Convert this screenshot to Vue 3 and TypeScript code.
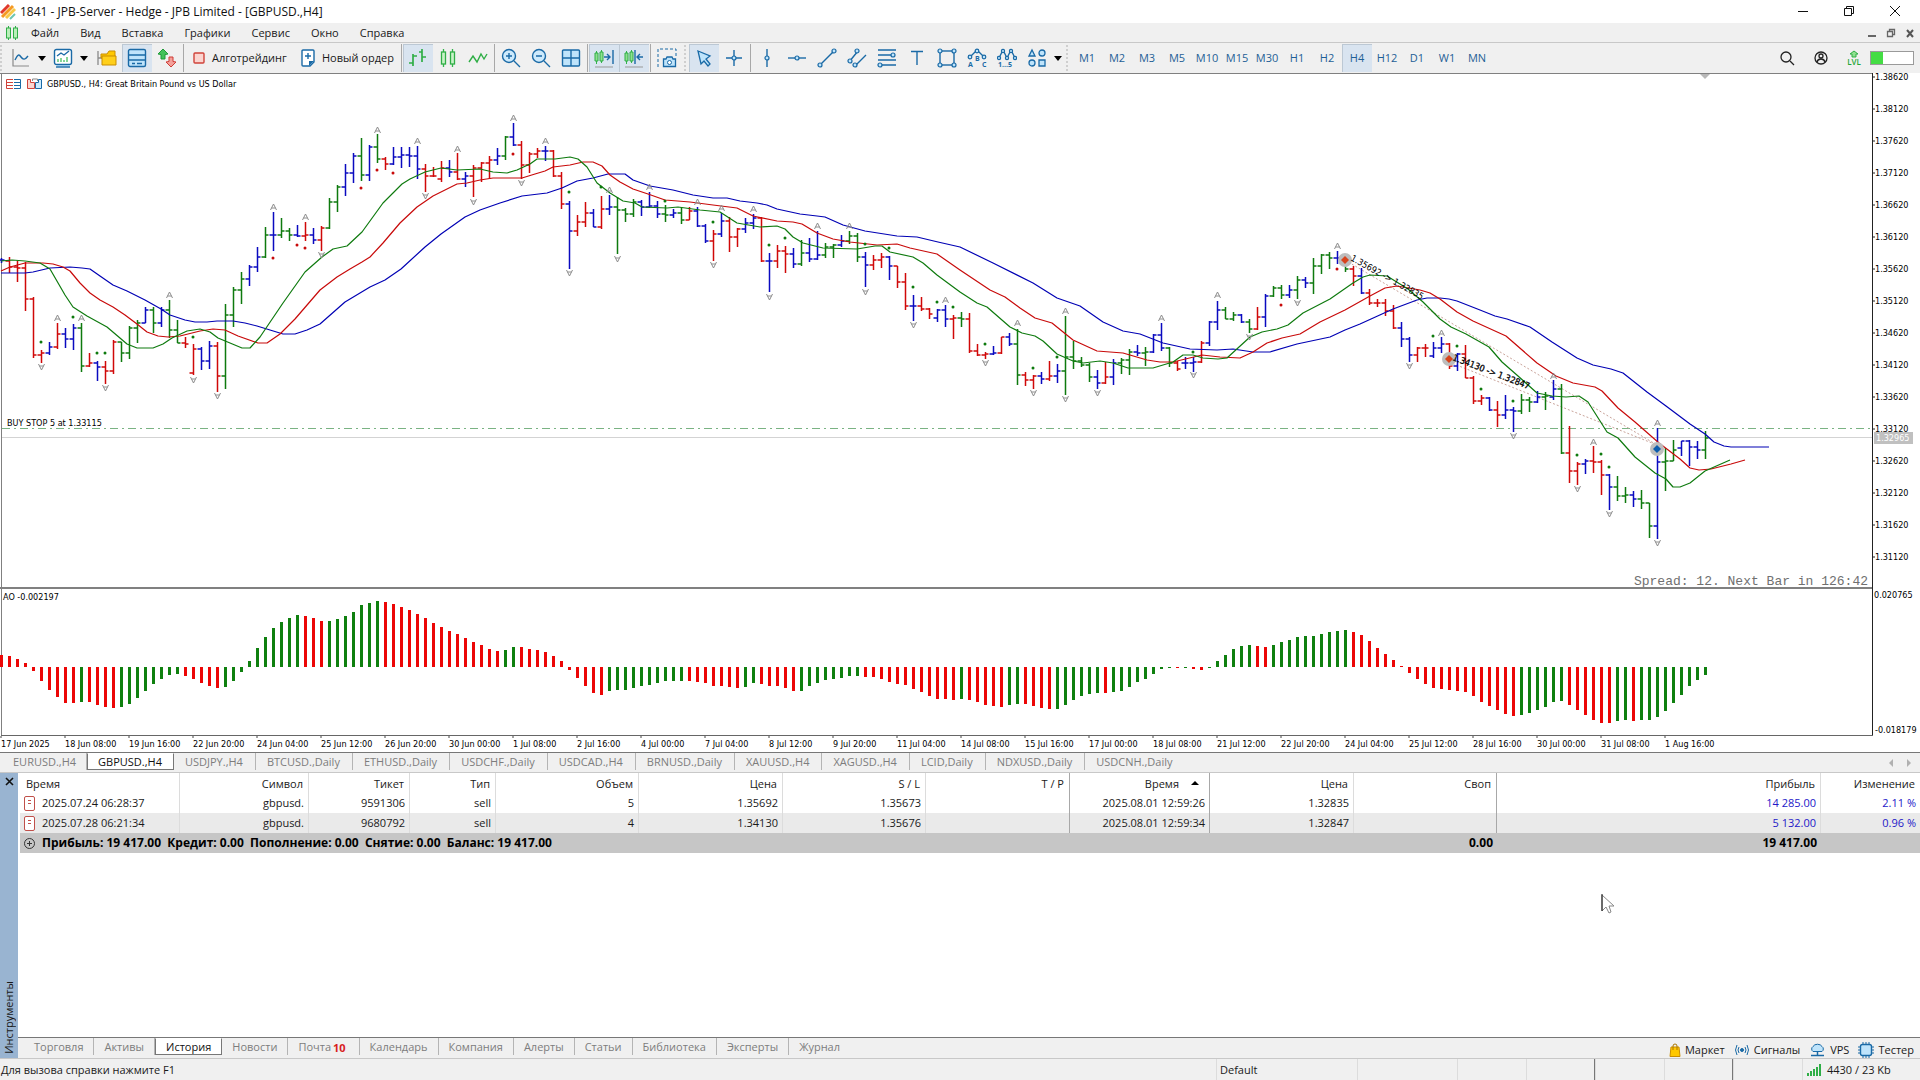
<script setup lang="ts">
type Tool = { id: string; label: string; art: string; on?: boolean }

const blue = 'stroke="#1a6aa6" fill="none" stroke-width="1.4"'
const node = (x: number, y: number, r = 2) =>
  `<circle cx="${x}" cy="${y}" r="${r}" fill="#bfe4fb" stroke="#1a6aa6" stroke-width="1.2"/>`
const candles = (x: number) =>
  `<path d="M${x + 1.5} 3v13M${x + 6.5} 2v13" stroke="#32b44a" stroke-width="1"/><path d="M${x} 5h3v8h-3zM${x + 5} 4h3v9h-3z" fill="#8fe08f" stroke="#2fae46"/>`

const menus: string[] = ['Файл', 'Вид', 'Вставка', 'Графики', 'Сервис', 'Окно', 'Справка']

const art: Record<string, string> = {
  line: `<path d="M2 1v17h16" stroke="#8a8a8a" fill="none" stroke-width="1.2"/><path d="M4 12c3-6 4-6 6-3s4 3 7-1" ${blue}/>`,
  window: `<path d="M4 17h13v2h-13z" fill="#bfe4fb"/><rect x="1.500" y="1.500" width="17" height="15" rx="2" fill="#fff" stroke="#1a6aa6" stroke-width="1.4"/><path d="M3 19h14" ${blue}/><path d="M4 8l4-3 3 2 5-4" ${blue}/><path d="M5 14v-3M8 14v-4M11 14v-2M14 14v-5" stroke="#53c46a" stroke-width="1.400"/>`,
  folder: `<path d="M1 3v14M1 10h6" stroke="#8a8a8a" fill="none" stroke-width="1.3"/><path d="M4 6h6l2-3h6v7H4z" fill="#ffc800" stroke="#c98d00"/><path d="M5 8h14v9H5z" fill="#ffcf1a" stroke="#c98d00"/>`,
  toolbox: `<rect x="1.500" y="1.500" width="17" height="17" rx="1.500" fill="#bfe4fb" stroke="#1a6aa6" stroke-width="1.400"/><path d="M2 7h16M2 12h16M5 15.500h3M10 15.500h5" ${blue}/>`,
  arrows: `<path d="M6 1l5 5-3 .5V11H4V6.500L1 6z" fill="#43c25a" stroke="#1f9a38"/><path d="M14 19l-5-5 3-.5V9h4v4.500l3 .5z" fill="#f3a09a" stroke="#cf3b34"/>`,
  bars: `<path d="M5 6v12M1 15h4M5 8h4M14 1v13M11 4h3M14 9h4" stroke="#2fae46" fill="none" stroke-width="1.700"/>`,
  candles: `<path d="M5.500 1v18M14.500 1v18" stroke="#32b44a" stroke-width="1.300"/><rect x="3.500" y="4" width="4" height="12" fill="#c9f2c9" stroke="#2fae46" stroke-width="1.300"/><rect x="12.500" y="4" width="4" height="12" fill="#c9f2c9" stroke="#2fae46" stroke-width="1.300"/>`,
  zigzag: `<path d="M1 14l4-6 4 6 4-8 3 5 3-5" stroke="#2fae46" fill="none" stroke-width="1.400"/>`,
  zoomIn: `<circle cx="8" cy="8" r="6.500" fill="#cdeafc" stroke="#1a6aa6" stroke-width="1.400"/><path d="M13 13l6 6M5 8h6M8 5v6" ${blue}/>`,
  zoomOut: `<circle cx="8" cy="8" r="6.500" fill="#cdeafc" stroke="#1a6aa6" stroke-width="1.400"/><path d="M13 13l6 6M5 8h6" ${blue}/>`,
  grid: `<rect x="1.500" y="2" width="17" height="16" rx="1" fill="#bfe4fb" stroke="#1a6aa6" stroke-width="1.400"/><path d="M10 2v16M2 10h16" ${blue}/>`,
  shift: `${candles(1)}<path d="M10 9h6M13 6l3 3-3 3M19 2v14" ${blue}/><path d="M1 19h18" stroke="#999"/>`,
  scroll: `${candles(1)}<path d="M11 2v14M13 9h6M16 6l-3 3 3 3" ${blue}/><path d="M1 19h18" stroke="#999"/>`,
  camera: `<path d="M1 19V1h18v7" stroke="#1a6aa6" fill="none" stroke-dasharray="3 2"/><path d="M7 11h2l1-2h5l1 2h2.500v7.500H6.500V11z" fill="#bfe4fb" stroke="#1a6aa6" stroke-width="1.300"/><circle cx="12.500" cy="14.500" r="2" fill="#fff" stroke="#1a6aa6"/>`,
  cursor: `<path d="M4 3l12 5-4 3 4 5-2 2-4-5-3 3z" fill="#bfe4fb" stroke="#1a6aa6" stroke-width="1.300"/>`,
  cross: `<path d="M10 2v16M2 10h16" ${blue}/>${node(10, 10)}`,
  vline: `<path d="M10 1v18" ${blue}/>${node(10, 10)}`,
  hline: `<path d="M1 10h18" ${blue}/>${node(10, 10)}`,
  trend: `<path d="M3 17L17 3" ${blue}/>${node(3, 17)}${node(17, 3)}`,
  channel: `<path d="M2 14L11 3M8 18L19 7" ${blue}/>${node(3, 13)}${node(10, 3)}${node(8, 17)}`,
  fibo: `<path d="M1 2h18M1 7h16M1 12h18M4 17h15" ${blue}/>${node(16, 7)}${node(3, 17)}`,
  text: `<path d="M4 3.500h12M10 3v14" ${blue}/>`,
  rect: `<rect x="3" y="3" width="14" height="14" ${blue}/>${node(3, 3)}${node(17, 3)}${node(3, 17)}${node(17, 17)}`,
  abc: `<path d="M3 9l7-7 7 7" ${blue}/>${node(10, 3, 1.8)}${node(3, 9, 1.8)}${node(17, 9, 1.8)}<g font-family="Open Sans, sans-serif" font-weight="700" font-size="7" fill="#1a6aa6"><text x="1" y="19">A</text><text x="8" y="13">B</text><text x="15" y="19">C</text></g>`,
  waves: `<path d="M2 10l4-8 4 8 4-8 4 8" ${blue}/>${node(2, 10, 1.6)}${node(6, 3, 1.6)}${node(10, 10, 1.6)}${node(14, 3, 1.6)}${node(18, 10, 1.6)}<text x="1" y="19" font-family="Open Sans, sans-serif" font-weight="700" font-size="7" fill="#1a6aa6">1...5</text>`,
  shapes: `<g fill="#bfe4fb" stroke="#1a6aa6" stroke-width="1.300"><path d="M2 8l3-6 3 6z"/><circle cx="15" cy="5" r="3"/><circle cx="5" cy="15" r="3"/><path d="M12 12h6v6h-6z"/></g>`,
}

const t = (id: string, label: string, on = false): Tool => ({ id, label, art: art[id], on })
const viewTools = [
  [t('bars', 'Бары', true), t('candles', 'Свечи'), t('zigzag', 'Линия')],
  [t('zoomIn', 'Увеличить'), t('zoomOut', 'Уменьшить'), t('grid', 'Окна мозаикой')],
  [t('shift', 'Автопрокрутка', true), t('scroll', 'Сдвиг графика', true)],
]
const pointerTools = [t('cursor', 'Курсор', true), t('cross', 'Перекрестие')]
const drawTools = [
  t('vline', 'Вертикальная линия'), t('hline', 'Горизонтальная линия'), t('trend', 'Трендовая линия'),
  t('channel', 'Канал'), t('fibo', 'Фибоначчи'), t('text', 'Текст'), t('rect', 'Прямоугольник'),
  t('abc', 'Коррекция'), t('waves', 'Волны'), t('shapes', 'Фигуры'),
]
const frames: string[] = 'M1 M2 M3 M5 M10 M15 M30 H1 H2 H4 H12 D1 W1 MN'.split(' ')

const chartTitle = 'GBPUSD., H4:  Great Britain Pound vs US Dollar'
const totals = 'Прибыль: 19 417.00  Кредит: 0.00  Пополнение: 0.00  Снятие: 0.00  Баланс: 19 417.00'

const chartTabs: string[] = [
  'EURUSD.,H4', 'GBPUSD.,H4', 'USDJPY.,H4', 'BTCUSD.,Daily', 'ETHUSD.,Daily', 'USDCHF.,Daily', 'USDCAD.,H4',
  'BRNUSD.,Daily', 'XAUUSD.,H4', 'XAGUSD.,H4', 'LCID,Daily', 'NDXUSD.,Daily', 'USDCNH.,Daily',
]
const panelTabs: string[] = [
  'Торговля', 'Активы', 'История', 'Новости', 'Почта', 'Календарь', 'Компания', 'Алерты', 'Статьи',
  'Библиотека', 'Эксперты', 'Журнал',
]

const columns: { name: string; w?: number; strong?: boolean; sorted?: boolean }[] = [
  { name: 'Время', w: 160 }, { name: 'Символ', w: 129 }, { name: 'Тикет', w: 101 }, { name: 'Тип', w: 86 },
  { name: 'Объем', w: 143 }, { name: 'Цена', w: 144 }, { name: 'S / L', w: 143 }, { name: 'T / P', w: 144, strong: true },
  { name: 'Время', w: 140, strong: true, sorted: true }, { name: 'Цена', w: 144 }, { name: 'Своп', w: 143, strong: true },
  { name: 'Прибыль' }, { name: 'Изменение', w: 99 },
]
const deals: string[][] = [
  ['2025.07.24 06:28:37', 'gbpusd.', '9591306', 'sell', '5', '1.35692', '1.35673', '', '2025.08.01 12:59:26', '1.32835', '', '14 285.00', '2.11 %'],
  ['2025.07.28 06:21:34', 'gbpusd.', '9680792', 'sell', '4', '1.34130', '1.35676', '', '2025.08.01 12:59:34', '1.32847', '', '5 132.00', '0.96 %'],
]

// Bars: colour, open, high, low, close; one bar every 8 px
const STEP = 8
const ohlc = `b260,258,263,260 r261,257,273,267 r267,261,282,268 r268,262,311,299 r299,297,358,355 r355,350,363,353 b353,342,355,347 r347,323,349,334 b334,328,348,339 b339,324,350,328
g328,323,372,366 r366,353,367,363 b363,361,381,367 r367,361,384,371 r371,340,374,342 g342,342,362,353 g353,326,359,328 g328,320,343,323 b323,307,323,310 g310,307,333,323
b323,307,327,310 g310,300,338,330 g330,320,343,343 r343,337,348,344 r373,344,375,349 b349,347,370,361 b361,341,369,346 r346,342,392,376 g376,304,389,315 g315,287,327,290
g290,272,304,279 b279,265,286,267 b267,247,272,257 g257,227,258,235 b235,212,251,235 g235,218,238,231 g231,228,241,235 b235,225,237,236 r236,222,241,235 b235,228,244,240
r240,226,251,228 g228,198,229,202 g202,185,212,187 b187,164,196,173 b173,153,183,156 g156,138,181,175 b175,145,181,147 g147,134,163,159 r159,157,170,164 b164,147,165,157
b157,147,168,155 b155,147,167,156 b156,146,179,169 r169,164,192,176 r176,167,177,176 r179,161,182,168 b168,160,177,172 r172,153,180,179 b179,172,187,176 r176,165,197,168
r168,162,182,163 r163,156,179,160 b160,148,165,156 g156,136,160,137 b137,123,146,145 r145,141,179,165 r165,152,173,154 r154,148,158,151 b151,146,161,151 r151,150,177,176
r176,172,209,204 b204,201,269,231 r231,215,236,222 r222,202,227,213 b213,209,227,227 r227,196,229,209 b209,195,215,207 g207,197,254,210 g210,208,222,214 g214,199,217,202
b202,200,216,207 b207,192,208,206 b206,201,218,214 g214,205,222,215 b215,209,218,213 g213,207,224,220 r220,207,220,211 b211,207,227,226 b226,224,243,241 r241,230,261,234
b234,213,237,221 r221,217,252,237 r237,228,247,229 b229,218,233,223 b223,214,229,218 r218,217,262,261 b261,253,292,261 r261,245,268,251 r251,246,273,254 b254,248,268,264
g264,240,266,253 b253,238,262,259 b259,231,260,255 g255,243,258,247 g247,244,258,245 b245,235,247,241 g241,231,244,236 g236,233,262,257 b257,252,287,265 r265,255,270,260
r260,253,268,257 b257,256,280,266 r266,266,288,282 r282,273,310,306 b306,295,321,306 r306,297,311,309 r309,308,319,314 b318,309,322,310 b310,305,327,319 r319,315,339,318
g318,312,327,319 r319,313,353,351 r351,344,356,355 r355,352,359,354 b354,346,355,353 r353,337,354,337 b337,333,346,344 g344,329,385,375 r375,372,386,380 r380,375,389,376
b376,372,384,379 r379,361,381,376 b376,364,383,371 g371,316,395,357 g357,341,369,361 g361,357,367,365 g365,363,382,377 b377,370,389,383 r383,362,384,377 b377,359,385,363
g363,358,374,360 g360,349,375,352 b352,345,356,353 g353,347,366,352 b352,334,353,335 b335,323,351,348 g348,347,367,363 r363,361,371,369 b363,357,369,363 b363,357,372,362
r362,341,363,343 b343,321,346,322 b322,301,330,310 g310,307,319,319 g319,312,321,315 b315,314,323,322 g322,319,333,329 r329,307,330,317 b317,294,327,296 g296,286,297,288
g288,285,299,295 b295,285,298,290 g290,276,299,280 b280,277,288,283 g283,258,294,266 g266,254,274,255 g255,252,269,258 b258,251,264,258 g259,258,272,269 r269,266,286,276
b276,268,294,293 r293,289,305,303 r303,299,307,303 r303,299,316,311 r311,305,329,328 b328,322,347,339 b339,337,362,355 r355,347,362,348 r348,344,357,348 b356,342,358,348
b348,337,353,344 r344,343,369,366 b366,353,371,354 r354,345,378,378 r378,376,404,401 r401,395,405,398 b398,397,411,410 r410,401,427,415 b415,395,419,410 b410,407,432,411
g411,394,414,400 g400,397,412,402 b402,391,403,397 g397,392,410,396 b397,380,400,389 g389,384,454,453 r453,426,483,471 r471,462,485,464 b464,459,474,461 r461,446,473,462
r462,460,495,475 b475,474,510,487 g487,476,501,496 g496,487,503,495 b495,491,507,499 g499,490,509,503 g503,503,538,526 b526,428,539,462 g462,448,491,461 g461,440,461,450
b448,441,456,441 b441,440,466,447 b447,441,459,450 g450,431,459,438`

const inks: Record<string, string> = { r: '#d00808', g: '#0e7a0e', b: '#0a0ac0' }
const bars = ohlc.trim().split(/\s+/).map((row, i) => {
  const [o, h, l, c] = row.slice(1).split(',').map(Number)
  const x = 1.5 + i * STEP
  return { ink: inks[row[0]], d: `M${x} ${h}V${l}M${x - 4} ${o}H${x}M${x} ${c}H${x + 3}` }
})

// Awesome Oscillator: colour and far end of each column, measured from the zero line
const ZERO = 667
const ao = `r655 r656 r659 r663 r671 r681 r690 r697 r703 r703 g702 r702 r705 r707 r708 g707 g704 g698 g691 g684
g679 g675 g674 r676 r679 r683 r686 r688 g687 g681 g672 g661 g648 g637 g628 g622 g618 g615 r616 r618
r621 g621 g619 g616 g612 g605 g603 g601 r602 r604 r607 r610 r614 r618 r623 r627 r631 r634 r638 r642
r645 r649 r651 g650 g647 r647 r649 r650 r652 r656 r661 r670 r678 r686 r693 r695 g691 g690 g690 g688
g686 g685 g683 g681 g681 g681 r681 r682 r683 r686 r686 r687 r688 g687 g683 r684 r686 r686 r688 r691
g691 g686 g683 g680 g679 g678 g676 g676 r677 r677 r679 r682 r684 r685 r689 r692 r696 r699 r699 r700
g699 r700 r702 r705 r706 r707 g705 g704 r704 r706 r708 r709 g709 g705 g700 g696 g694 g693 r693 g692
g691 g687 g682 g679 g674 g669 g668 r668 g668 r669 r670 g668 g661 g655 g649 g646 g645 r646 r647 g645
g642 g640 g637 g636 g636 g634 g632 g631 g630 r632 r635 r641 r648 r654 r660 r666 r673 r679 r684 r688
r689 r690 r691 r692 r696 r702 r706 r710 r714 r716 g715 g713 g710 g707 g702 g701 r705 r710 r715 r720
r723 r723 g721 g720 r721 g720 g720 g717 g711 g703 g695 g686 g680 g675`
const columnsAo = ao.trim().split(/\s+/).map((v, i) => {
  const end = Number(v.slice(1))
  return { x: i * STEP, y: Math.min(end, ZERO), h: Math.abs(end - ZERO), fill: v[0] === 'r' ? '#ec0606' : '#0f800f' }
})

const averages: { ink: string; pts: string }[] = [
  { ink: '#0000b4', pts: '1,273 25,273 33,272 50,268 70,267 82,268 90,269 100,276 113,285 127,291 145,300 161,309 170,315 185,320 195,322 207,322 217,321 233,321 245,323 257,326 270,330 283,334 295,334 307,330 320,324 345,302 370,287 385,280 401,269 425,247 441,234 465,217 480,210 500,203 522,196 547,193 562,188 577,181 593,178 608,174 625,174 633,180 650,186 673,190 693,195 713,198 727,198 740,201 757,203 767,205 777,209 800,214 817,216 825,217 843,225 865,231 897,236 917,237 938,242 960,247 993,263 1033,283 1057,298 1080,306 1103,322 1123,331 1140,334 1163,343 1190,349 1217,350 1233,349 1253,352 1270,352 1297,344 1330,337 1345,330 1360,324 1393,309 1417,300 1427,298 1440,298 1449,299 1457,301 1480,310 1495,316 1507,319 1530,327 1552,342 1577,358 1593,365 1611,369 1623,373 1647,392 1666,406 1690,424 1705,434 1714,442 1724,446 1731,447 1769,447' },
  { ink: '#c80a0a', pts: '1,271 10,267 25,263 43,263 53,264 63,267 70,271 80,283 90,293 100,300 113,307 125,315 137,324 147,332 158,336 168,337 180,336 200,331 213,329 225,330 238,336 258,343 267,343 280,334 295,319 320,290 337,277 350,269 362,262 370,257 383,243 400,223 417,207 433,196 457,184 467,183 480,180 493,178 522,178 535,174 545,171 553,167 570,165 583,162 593,162 602,166 610,175 620,182 633,189 648,194 665,200 690,202 713,205 737,208 753,216 777,221 793,222 802,224 817,233 833,239 850,242 877,245 897,244 910,248 937,254 960,270 990,290 1005,297 1020,308 1035,318 1052,323 1073,340 1097,351 1123,353 1147,360 1160,362 1173,362 1202,355 1220,357 1240,358 1253,352 1267,343 1282,338 1300,334 1320,322 1345,310 1370,296 1385,288 1397,286 1420,290 1430,293 1440,299 1457,312 1473,321 1506,336 1537,363 1556,376 1573,383 1595,387 1602,391 1618,408 1635,422 1659,443 1680,459 1690,468 1699,470 1711,469 1731,464 1745,460' },
  { ink: '#0e7a0e', pts: '1,261 12,260 25,261 40,263 50,269 65,295 73,307 87,316 107,327 127,344 137,348 153,348 163,344 172,338 187,331 200,329 210,332 218,338 242,348 250,348 260,337 283,303 305,272 322,257 333,249 347,246 362,232 383,203 393,193 402,184 410,179 425,172 441,168 457,170 480,169 493,172 507,173 517,170 530,164 537,159 555,159 570,157 578,159 587,167 597,183 610,193 623,201 635,203 642,207 667,208 678,207 700,210 720,212 737,223 760,227 777,226 785,229 793,237 803,243 823,248 857,249 875,246 882,246 890,252 913,257 923,263 937,275 960,292 977,303 987,307 1010,327 1022,333 1035,336 1043,341 1057,354 1073,361 1083,363 1100,361 1113,363 1128,368 1153,368 1173,362 1183,355 1193,355 1203,358 1218,359 1227,358 1250,337 1262,332 1277,329 1288,325 1303,313 1330,299 1353,283 1363,277 1370,275 1387,276 1408,289 1423,302 1440,319 1451,327 1466,334 1489,347 1502,362 1518,376 1537,393 1552,396 1566,397 1579,396 1588,402 1607,432 1618,438 1635,457 1655,473 1666,479 1673,487 1680,487 1690,483 1705,471 1730,460' },
]

const points = (s: string) => s.split(' ').map((p) => p.split(',').map(Number))
const upFractals = points('57,318 81,318 169,295 273,207 305,217 377,130 417,141 457,149 513,118 545,141 609,190 649,187 697,202 721,208 753,209 817,226 849,226 945,300 1017,323 1065,311 1161,318 1217,295 1337,246 1441,333 1553,376 1593,442 1657,423')
const downFractals = points('41,367 105,388 193,380 217,396 321,255 425,196 473,202 521,183 569,273 617,259 713,265 769,297 865,292 913,325 985,363 1033,393 1065,399 1097,393 1193,375 1249,337 1297,303 1409,366 1513,436 1577,489 1609,514 1657,543')
const greenDots = points('41,342 73,317 97,353 105,353 193,337 569,192 601,187 665,201 713,222 769,245 785,238 865,244 889,248 913,287 937,302 953,307 985,344 1033,368 1057,357 1193,352 1433,336 1457,346 1481,389 1513,401 1577,455 1601,454 1609,467')
const redDots = points('273,258 297,245 305,248 361,188 377,170 393,173 513,154 1281,305 1337,269')

const prices = Array.from({ length: 16 }, (_, i) => ({ y: 77 + i * 32, text: (1.3862 - i * 0.005).toFixed(5) }))
const dates = [
  '17 Jun 2025', '18 Jun 08:00', '19 Jun 16:00', '22 Jun 20:00', '24 Jun 04:00', '25 Jun 12:00', '26 Jun 20:00',
  '30 Jun 00:00', '1 Jul 08:00', '2 Jul 16:00', '4 Jul 00:00', '7 Jul 04:00', '8 Jul 12:00', '9 Jul 20:00',
  '11 Jul 04:00', '14 Jul 08:00', '15 Jul 16:00', '17 Jul 00:00', '18 Jul 08:00', '21 Jul 12:00', '22 Jul 20:00',
  '24 Jul 04:00', '25 Jul 12:00', '28 Jul 16:00', '30 Jul 00:00', '31 Jul 08:00', '1 Aug 16:00',
].map((text, i) => ({ text, x: 1 + i * 64 }))
</script>

<template>
  <div class="app">
    <header class="title-bar">
      <svg width="16" height="16" viewBox="0 0 16 16" aria-hidden="true">
        <path d="M1 9L9 1" stroke="#e0392b" stroke-width="3" />
        <path d="M2 13L13 2" stroke="#f59a23" stroke-width="3" />
        <path d="M6 14L15 5" stroke="#f7c948" stroke-width="3" />
        <path d="M10 15l5-5" stroke="#6cc5b0" stroke-width="2" />
      </svg>
      <h1>1841 - JPB-Server - Hedge - JPB Limited - [GBPUSD.,H4]</h1>
      <div class="window-buttons">
        <button aria-label="Свернуть"><svg width="12" height="12"><path d="M1 6.500h10" stroke="#111" /></svg></button>
        <button aria-label="Восстановить">
          <svg width="12" height="12" fill="none" stroke="#111"><path d="M1.500 3.500h7v7h-7zM3.500 3.500v-2h7v7h-2" /></svg>
        </button>
        <button aria-label="Закрыть"><svg width="12" height="12"><path d="M1 1l10 10M11 1L1 11" stroke="#111" /></svg></button>
      </div>
    </header>

    <nav class="menu-bar">
      <svg width="14" height="16" viewBox="0 0 14 16" aria-hidden="true">
        <path d="M3.500 1v14M10.500 1v14" stroke="#2fae46" />
        <rect x="1.500" y="3" width="4" height="10" fill="#b9efb9" stroke="#2fae46" />
        <rect x="8.500" y="3" width="4" height="10" fill="#b9efb9" stroke="#2fae46" />
      </svg>
      <button v-for="m in menus" :key="m">{{ m }}</button>
      <div class="mdi-buttons">
        <button aria-label="Свернуть окно"><svg width="10" height="10"><path d="M1 8h8" stroke="#666" stroke-width="2" /></svg></button>
        <button aria-label="Восстановить окно">
          <svg width="10" height="10" fill="none" stroke="#666"><path d="M1.500 3.500h5v5h-5zM3.500 3V1.500h5v5H7" stroke-width="1.300" /></svg>
        </button>
        <button aria-label="Закрыть окно"><svg width="10" height="10"><path d="M2 2l6 7M8 2L2 9" stroke="#555" stroke-width="2" /></svg></button>
      </div>
    </nav>

    <div class="toolbar">
      <i class="grip first"></i>
      <button class="tool" aria-label="График"><svg viewBox="0 0 20 20" v-html="art.line"></svg></button>
      <button class="caret" aria-label="Список графиков"><svg viewBox="0 0 8 5"><path d="M0 0h8L4 5z" /></svg></button>
      <button class="tool" aria-label="Шаблоны"><svg viewBox="0 0 20 20" v-html="art.window"></svg></button>
      <button class="caret wide" aria-label="Список шаблонов"><svg viewBox="0 0 8 5"><path d="M0 0h8L4 5z" /></svg></button>
      <button class="tool" aria-label="Навигатор"><svg viewBox="0 0 20 20" v-html="art.folder"></svg></button>
      <button class="tool on" aria-label="Инструменты"><svg viewBox="0 0 20 20" v-html="art.toolbox"></svg></button>
      <button class="tool" aria-label="Обзор рынка"><svg viewBox="0 0 20 20" v-html="art.arrows"></svg></button>
      <i class="sep"></i>
      <button class="command algo">
        <svg width="12" height="12"><rect x="1" y="1" width="10" height="10" rx="1" fill="#fbd5d0" stroke="#d0433a" stroke-width="1.400" /></svg>
        Алготрейдинг
      </button>
      <button class="command order">
        <svg width="14" height="18">
          <path d="M2 1h10a1 1 0 0 1 1 1v11l-4 4H2a1 1 0 0 1-1-1V2a1 1 0 0 1 1-1z" fill="#fff" stroke="#1a6aa6" stroke-width="1.400" />
          <path d="M13 12l-5 5v-5z" fill="#1a6aa6" /><path d="M7 4v6M4 7h6" stroke="#1a6aa6" stroke-width="1.400" />
        </svg>
        Новый ордер
      </button>
      <template v-for="(group, g) in viewTools" :key="g">
        <i class="sep"></i>
        <button v-for="b in group" :key="b.id" class="tool" :class="{ on: b.on }" :aria-label="b.label">
          <svg viewBox="0 0 20 20" v-html="b.art"></svg>
        </button>
      </template>
      <i class="sep"></i>
      <button class="tool" aria-label="Снимок экрана"><svg viewBox="0 0 20 20" v-html="art.camera"></svg></button>
      <i class="grip"></i>
      <button v-for="b in pointerTools" :key="b.id" class="tool" :class="{ on: b.on }" :aria-label="b.label">
        <svg viewBox="0 0 20 20" v-html="b.art"></svg>
      </button>
      <i class="sep"></i>
      <button v-for="b in drawTools" :key="b.id" class="tool" :aria-label="b.label">
        <svg viewBox="0 0 20 20" v-html="b.art"></svg>
      </button>
      <button class="caret" aria-label="Все фигуры"><svg viewBox="0 0 8 5"><path d="M0 0h8L4 5z" /></svg></button>
      <i class="grip last"></i>
      <button v-for="f in frames" :key="f" class="tool frame" :class="{ on: f === 'H4' }">{{ f }}</button>
      <div class="toolbar-end">
        <button aria-label="Поиск">
          <svg width="16" height="16" fill="none" stroke="#222" stroke-width="1.300"><circle cx="7" cy="7" r="5" /><path d="M11 11l4 4" /></svg>
        </button>
        <button aria-label="Профиль">
          <svg width="16" height="16" fill="none" stroke="#222" stroke-width="1.300">
            <circle cx="8" cy="8" r="6" /><circle cx="8" cy="6" r="2" /><path d="M4 12c1-4 7-4 8 0" />
          </svg>
        </button>
        <button class="level" aria-label="Уровень">
          <svg width="10" height="8" fill="#8fe08f" stroke="#2fae46"><path d="M5 1l4 3H7v3H3V4H1z" /></svg>
          <span>LVL</span>
        </button>
        <div class="meter"><i></i></div>
      </div>
    </div>

    <svg class="chart" viewBox="0 73 1920 680" role="img" aria-label="GBPUSD H4">
      <path d="M0 73.500H1873" stroke="#808080" /><path d="M1.500 73V735" stroke="#808080" />
      <path d="M1700 74h10l-5 5z" fill="#b8b8b8" />

      <path d="M2 437.500H1872" stroke="#d3d3d3" />
      <path d="M2 428.500H1872" stroke="#7ab383" stroke-dasharray="8 4 2 4" />

      <path d="M1345 260L1657 445M1449 362L1657 445" stroke="#c9a39a" stroke-dasharray="2 2" fill="none" />
      <path v-for="(b, i) in bars" :key="i" :d="b.d" :stroke="b.ink" stroke-width="1.500" fill="none" />
      <polyline v-for="a in averages" :key="a.ink" :points="a.pts" :stroke="a.ink" stroke-width="1.200" fill="none" stroke-linejoin="round" />

      <g stroke="#8c8c8c" fill="none">
        <path v-for="(p, i) in upFractals" :key="'u' + i" :d="`M${p[0] - 2.5} ${p[1] + 3}l3-6 3 6m-5-2h4`" />
        <path v-for="(p, i) in downFractals" :key="'d' + i" :d="`M${p[0] - 2.5} ${p[1] - 3}l3 6 3-6m-5 2h4`" />
      </g>
      <circle v-for="(p, i) in greenDots" :key="'g' + i" :cx="p[0]" :cy="p[1]" r="1.500" fill="#0e7a0e" />
      <circle v-for="(p, i) in redDots" :key="'r' + i" :cx="p[0]" :cy="p[1]" r="1.500" fill="#c80a0a" />

      <g fill="#bdbdbd"><circle cx="1345" cy="260" r="7" /><circle cx="1449" cy="359" r="7" /><circle cx="1657" cy="449" r="7" /></g>
      <path d="M1345 256l4 4-4 4-4-4zM1449 355l4 4-4 4-4-4z" fill="#d8431c" />
      <path d="M1657 445l4 4-4 4-4-4z" fill="#0b5cad" />

      <g class="label">
        <text x="0" y="0" transform="translate(1350 260) rotate(29)">1.35692 -&gt; 1.32835</text>
        <text x="0" y="0" class="deal" transform="translate(1452 360) rotate(21)">1.34130 -&gt; 1.32847</text>
        <text x="7" y="426">BUY STOP 5 at 1.33115</text>
        <text x="47" y="87">{{ chartTitle }}</text>
        <text x="3" y="600">AO -0.002197</text>
      </g>
      <g fill="none">
        <path d="M13 79.500H6.500v9H13M6 82.500h7M6 85.500h7" stroke="#d0433a" />
        <path d="M14 79.500h6.500v9H14M14 82.500h6M14 85.500h6" stroke="#1a6aa6" />
        <path d="M27.500 79.500h3v3h4v6h-7z" stroke="#d0433a" fill="#fbd5d0" />
        <path d="M35.500 82.500h3v-3h3v9h-6z" stroke="#1a6aa6" fill="#cdeafc" />
        <path d="M32.500 81v-2h5v2" stroke="#888" />
      </g>
      <text class="spread" x="1868" y="585" text-anchor="end">Spread: 12. Next Bar in 126:42</text>

      <path d="M0 588H1873" stroke="#808080" stroke-width="2" />
      <rect v-for="(c, i) in columnsAo" :key="'a' + i" :x="c.x" :y="c.y" width="3" :height="c.h" :fill="c.fill" />

      <path d="M1872.500 73V736" stroke="#222" />
      <path d="M1 735.500H1873" stroke="#666" />
      <g class="label">
        <g v-for="p in prices" :key="p.text">
          <path :d="`M1872 ${p.y}h3`" stroke="#222" /><text x="1875" :y="p.y + 3">{{ p.text }}</text>
        </g>
        <text x="1874" y="598">0.020765</text>
        <text x="1875" y="733">-0.018179</text>
        <g v-for="d in dates" :key="d.text">
          <path :d="`M${d.x} 736v2`" stroke="#444" /><text :x="d.x" y="747">{{ d.text }}</text>
        </g>
      </g>
      <rect x="1874" y="432" width="39" height="12" fill="#c0c0c0" />
      <text class="label now" x="1876" y="441">1.32965</text>
      <path d="M0 752.500H1920" stroke="#777" />
    </svg>

    <div class="chart-tabs" role="tablist">
      <button v-for="(c, i) in chartTabs" :key="c" role="tab" :aria-selected="i === 1" :class="{ active: i === 1 }">{{ c }}</button>
      <div class="scrollers">
        <button aria-label="Назад"><svg width="4" height="8"><path d="M4 0v8L0 4z" fill="#b0b0b0" /></svg></button>
        <button aria-label="Вперёд"><svg width="4" height="8"><path d="M0 0v8l4-4z" fill="#b0b0b0" /></svg></button>
      </div>
    </div>

    <section class="panel">
      <aside class="side">
        <button aria-label="Закрыть панель"><svg width="9" height="9"><path d="M1 1l7 7M8 1L1 8" stroke="#111" stroke-width="1.600" /></svg></button>
        <span>Инструменты</span>
      </aside>
      <div class="content">
        <table>
          <colgroup><col v-for="(c, i) in columns" :key="i" :style="c.w ? { width: c.w + 'px' } : {}" /></colgroup>
          <thead>
            <tr>
              <th v-for="(c, i) in columns" :key="i" :class="{ strong: c.strong, sorted: c.sorted }">
                {{ c.name }}<svg v-if="c.sorted" width="8" height="4"><path d="M0 4l4-4 4 4z" /></svg>
              </th>
            </tr>
          </thead>
          <tbody>
            <tr v-for="row in deals" :key="row[2]">
              <td v-for="(cell, i) in row" :key="i" :class="{ strong: columns[i].strong, gain: i > 10 }">
                <svg v-if="i === 0" width="11" height="15" fill="none" stroke="#c0504a">
                  <rect x=".5" y=".5" width="10" height="14" rx="1.500" fill="#fff" /><path d="M4 4.500h3M4 7.500h3" />
                </svg>{{ cell }}
              </td>
            </tr>
          </tbody>
          <tfoot>
            <tr>
              <td colspan="10">
                <svg width="11" height="11" fill="none" stroke="#333"><circle cx="5.500" cy="5.500" r="5" /><path d="M3 5.500h5M5.500 3v5" /></svg><span class="totals">{{ totals }}</span>
              </td>
              <td>0.00</td>
              <td>19 417.00</td>
              <td></td>
            </tr>
          </tfoot>
        </table>
        <svg class="pointer" width="14" height="21" viewBox="0 0 14 21" aria-hidden="true">
          <path d="M1 1v16l4-4 3 6 2-1-2-6h5z" fill="#fff" stroke="#888" /><path d="M1 0v17" stroke="#111" />
        </svg>
        <div class="panel-tabs">
          <div class="tabs" role="tablist">
            <button v-for="p in panelTabs" :key="p" role="tab" :aria-selected="p === 'История'" :class="{ active: p === 'История' }">
              {{ p }}<b v-if="p === 'Почта'">10</b>
            </button>
          </div>
          <div class="services">
            <a href="#market">
              <svg width="12" height="14"><path d="M2 4h8l1 9.500H1z" fill="#ffc800" stroke="#c98d00" /><path d="M4 7V3a2 2 0 0 1 4 0v4" fill="none" stroke="#a97400" /></svg>Маркет
            </a>
            <a href="#signals">
              <svg width="16" height="12" fill="none" stroke="#1a6aa6"><path d="M3 1Q0 6 3 11M5 3Q3 6 5 9M13 1q3 5 0 10M11 3q2 3 0 6" /><circle cx="8" cy="6" r="1.500" fill="#1a6aa6" /></svg>Сигналы
            </a>
            <a href="#vps">
              <svg width="17" height="15" fill="#bfe4fb" stroke="#1a6aa6"><path d="M4 9.500a3 3 0 0 1 0-5 5 4 0 0 1 9 0 3 3 0 0 1 0 5z" /><path d="M8.500 10v3M2 13.500h13" stroke-width="1.500" /></svg>VPS
            </a>
            <a href="#tester">
              <svg width="16" height="16" fill="#bfe4fb" stroke="#1a6aa6"><path d="M5 0v16M8 0v16M11 0v16M0 5h16M0 8h16M0 11h16" /><rect x="2.500" y="2.500" width="11" height="11" rx="2" stroke-width="1.400" /></svg>Тестер
            </a>
          </div>
        </div>
      </div>
    </section>

    <footer class="status-bar">
      <span class="hint">Для вызова справки нажмите F1</span>
      <span class="cell profile">Default</span>
      <span class="cell"></span>
      <span class="cell short"></span>
      <span class="cell short dark-end"></span>
      <span class="cell short"></span>
      <span class="cell short dark-end"></span>
      <span class="cell short"></span>
      <span class="cell traffic">
        <svg width="15" height="12" fill="#2fae46"><path d="M0 9h2v3H0zM3 7h2v5H3zM6 5h2v7H6zM9 3h2v9H9zM12 0h2v12h-2z" /></svg>4430 / 23 Kb
      </span>
    </footer>
  </div>
</template>

<style>
body { margin: 0; background: #fff; }
</style>

<style scoped>
.app { display: flex; flex-direction: column; min-height: 100vh; background: #fff; color: #1a1a1a; font: 11px/16px "Open Sans", "Noto Sans", sans-serif; }
button { margin: 0; padding: 0; border: 0; background: none; color: inherit; font: inherit; display: flex; align-items: center; justify-content: center; flex: none; white-space: nowrap; }
svg { display: block; flex: none; }

.title-bar { display: flex; align-items: center; height: 23px; gap: 4px; }
.title-bar h1 { margin: 0; font-size: 12px; font-weight: 400; color: #111; flex: 1; }
.window-buttons { display: flex; align-self: flex-start; padding-right: 2px; }
.window-buttons button { width: 46px; height: 21px; }

.menu-bar { display: flex; align-items: center; height: 19px; padding-left: 5px; background: #f0f0f0; border-bottom: 1px solid #c8c8c8; }
.menu-bar button { padding: 0 10px 0 11px; }
.menu-bar svg + button { margin-left: 1px; }
.mdi-buttons { display: flex; margin-left: auto; padding-right: 1px; }
.mdi-buttons button { width: 19px; padding: 0; }

.toolbar { display: flex; align-items: center; height: 30px; background: #f0f0f0; }
.tool { width: 30px; height: 28px; }
.tool svg { width: 20px; height: 20px; }
.on { background: #d9e4f0; box-shadow: inset 1px 1px #bcc8d4; }
.caret { width: 12px; height: 28px; }
.caret svg { width: 8px; height: 5px; }
.caret.wide { margin-right: 2px; }
.sep { width: 1px; height: 28px; margin: 0 1px; background: #a8a8a8; flex: none; }
.grip { width: 0; height: 26px; margin: 0 3px 0 2px; border-left: 2px dotted #cfcfcf; flex: none; }
.grip.first { margin: 0 4px 0 0; }
.grip.last { margin-right: 4px; }
.command { height: 28px; justify-content: flex-start; gap: 7px; }
.algo { width: 108px; padding-left: 8px; box-sizing: border-box; }
.order { width: 107px; padding-left: 8px; box-sizing: border-box; }
.frame { color: #1f5f96; }
.toolbar-end { display: flex; align-items: center; margin-left: auto; padding-right: 6px; }
.toolbar-end button { width: 34px; height: 28px; }
.toolbar-end .level { width: 32px; flex-direction: column; color: #1fa838; font-size: 8px; font-weight: 600; line-height: 8px; }
.meter { width: 42px; height: 12px; border: 1px solid #9a9a9a; background: #fff; }
.meter i { display: block; width: 28%; height: 100%; background: #44dd44; }

.chart { width: 100%; height: auto; }
.label { font: 9px "DejaVu Sans Condensed", "DejaVu Sans", sans-serif; fill: #000; white-space: pre; }
.deal { stroke: #000; stroke-width: 0.3px; }
.now { fill: #fff; }
.spread { font: 13px "Liberation Mono", monospace; fill: #707070; }

.chart-tabs { display: flex; height: 20px; background: #f0f0f0; border-bottom: 1px solid #c8c8c8; box-sizing: border-box; color: #7d7d7d; }
.chart-tabs > button { padding: 0 12px 0 11px; height: 17px; border-right: 1px solid #b4b4b4; }
.chart-tabs > button:first-child { padding: 0 10px 0 13px; }
.chart-tabs .active, .tabs .active { background: #fff; color: #111; border: 1px solid #777; border-top-color: #fff; }
.chart-tabs > .active { padding: 0 11px 0 10px; }
.chart-tabs > button:nth-last-child(2) { border-right: 0; }
.scrollers { display: flex; gap: 14px; margin-left: auto; padding-right: 9px; }

.panel { display: flex; flex: 1; }
.side { width: 18px; flex: none; background: #99b4d1; display: flex; flex-direction: column; align-items: center; justify-content: space-between; padding: 4px 0; box-sizing: border-box; }
.side span { writing-mode: vertical-rl; transform: rotate(180deg); }
.content { flex: 1; min-width: 0; display: flex; flex-direction: column; justify-content: space-between; position: relative; }
table { width: 100%; table-layout: fixed; border-collapse: separate; border-spacing: 0; padding-left: 2px; }
th, td { padding: 0 4px 0 0; text-align: right; font-weight: 400; border-right: 1px solid #dcdcdc; white-space: nowrap; box-sizing: border-box; }
th { height: 20px; padding: 2px 5px 0 0; }
td { height: 20px; }
th:first-child, td:first-child { text-align: left; padding-left: 6px; }
th:last-child, td:last-child { border-right: 0; }
.strong { border-right-color: #a8a8a8; }
th.sorted { padding-right: 10px; }
th svg { display: inline-block; margin-left: 12px; vertical-align: 3px; }
td:first-child svg { display: inline-block; margin: 0 7px 0 -2px; vertical-align: middle; }
tbody tr:nth-child(2) td { background: #eaeaea; }
.gain { color: #2318c8; }
tfoot td { background: #c6c6c6; border-right: 0; font-size: 12px; font-weight: 700; color: #000; }
.totals { white-space: pre; }
.pointer { position: absolute; left: 1583px; top: 121px; }

.panel-tabs { display: flex; justify-content: space-between; height: 21px; background: #f0f0f0; border-top: 1px solid #777; box-sizing: border-box; }
.tabs { display: flex; color: #7d7d7d; padding-left: 6px; }
.tabs button { padding: 0 10px; height: 17px; border-right: 1px solid #b4b4b4; }
.tabs button:last-child { border-right: 0; }
.tabs b { color: #d81e1e; margin: 2px 3px 0 2px; }
.services { display: flex; gap: 9px; padding: 3px 6px 0 0; }
.services a { display: flex; align-items: center; gap: 4px; color: #1a1a1a; text-decoration: none; }

.status-bar { display: flex; align-items: stretch; height: 21px; line-height: 21px; background: #f0f0f0; border-top: 1px solid #c8c8c8; }
.hint { flex: 1; padding-left: 1px; }
.cell { border-left: 1px solid #dcdcdc; box-sizing: border-box; width: 100px; }
.profile { width: 141px; padding-left: 3px; }
.short { width: 69px; }
.dark-end { border-right: 1px solid #777; }
.traffic { width: 118px; display: flex; align-items: center; gap: 5px; padding-left: 4px; }
</style>
